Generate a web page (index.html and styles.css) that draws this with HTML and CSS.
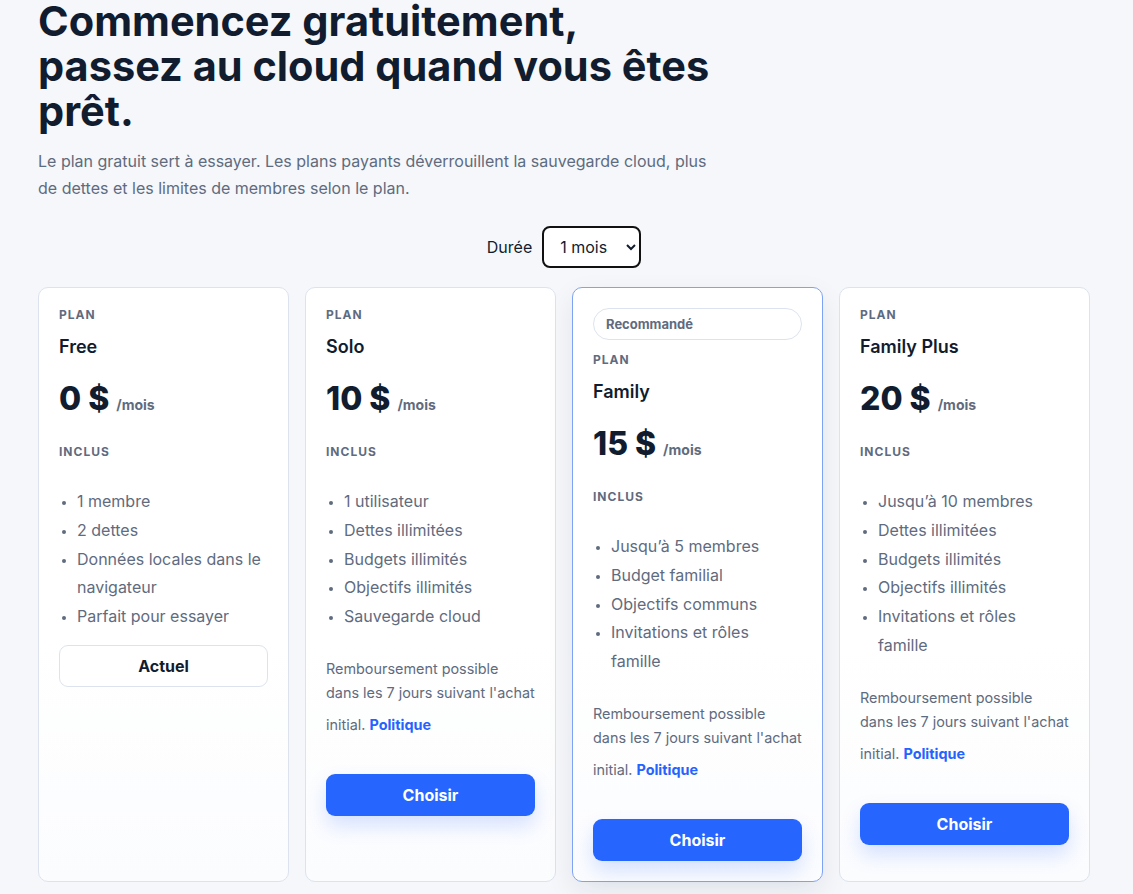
FILE: index.html
```html
<!DOCTYPE html>
<html lang="fr">
<head>
    <meta charset="UTF-8">
    <title>Tarifs</title>
    <link rel="stylesheet" href="styles.css">
</head>
<body>
    <main class="page">
        <header class="hero">
            <h1>Commencez gratuitement, passez au cloud quand vous êtes prêt.</h1>
            <p class="lead">Le plan gratuit sert à essayer. Les plans payants déverrouillent la sauvegarde cloud, plus de dettes et les limites de membres selon le plan.</p>
        </header>

        <div class="duration">
            <label for="duration">Durée</label>
            <select id="duration">
                <option>1 mois</option>
                <option>12 mois</option>
            </select>
        </div>

        <section class="plans">
            <article class="plan">
                <div class="plan-label">Plan</div>
                <h2 class="plan-name">Free</h2>
                <div class="price">0 $ <span class="per">/mois</span></div>
                <div class="plan-label included">Inclus</div>
                <ul class="features">
                    <li>1 membre</li>
                    <li>2 dettes</li>
                    <li>Données locales dans le navigateur</li>
                    <li>Parfait pour essayer</li>
                </ul>
                <button class="btn btn-current">Actuel</button>
            </article>

            <article class="plan">
                <div class="plan-label">Plan</div>
                <h2 class="plan-name">Solo</h2>
                <div class="price">10 $ <span class="per">/mois</span></div>
                <div class="plan-label included">Inclus</div>
                <ul class="features">
                    <li>1 utilisateur</li>
                    <li>Dettes illimitées</li>
                    <li>Budgets illimités</li>
                    <li>Objectifs illimités</li>
                    <li>Sauvegarde cloud</li>
                </ul>
                <p class="refund">Remboursement possible dans les 7 jours suivant l'achat initial. <a href="#">Politique</a></p>
                <button class="btn btn-primary">Choisir</button>
            </article>

            <article class="plan featured">
                <div class="badge">Recommandé</div>
                <div class="plan-label">Plan</div>
                <h2 class="plan-name">Family</h2>
                <div class="price">15 $ <span class="per">/mois</span></div>
                <div class="plan-label included">Inclus</div>
                <ul class="features">
                    <li>Jusqu’à 5 membres</li>
                    <li>Budget familial</li>
                    <li>Objectifs communs</li>
                    <li>Invitations et rôles famille</li>
                </ul>
                <p class="refund">Remboursement possible dans les 7 jours suivant l'achat initial. <a href="#">Politique</a></p>
                <button class="btn btn-primary">Choisir</button>
            </article>

            <article class="plan">
                <div class="plan-label">Plan</div>
                <h2 class="plan-name">Family Plus</h2>
                <div class="price">20 $ <span class="per">/mois</span></div>
                <div class="plan-label included">Inclus</div>
                <ul class="features">
                    <li>Jusqu’à 10 membres</li>
                    <li>Dettes illimitées</li>
                    <li>Budgets illimités</li>
                    <li>Objectifs illimités</li>
                    <li>Invitations et rôles famille</li>
                </ul>
                <p class="refund">Remboursement possible dans les 7 jours suivant l'achat initial. <a href="#">Politique</a></p>
                <button class="btn btn-primary">Choisir</button>
            </article>
        </section>
    </main>
</body>
</html>
```

FILE: styles.css
```css
body {
    margin: 0;
    background: #f5f7fb;
    font-family: 'Inter', 'Noto Sans', sans-serif;
    color: #0f172a;
}

.page {
    width: 1052px;
    padding: 0 0 40px 38px;
}

.hero {
    max-width: 680px;
}

h1 {
    margin: -1px 0 0;
    font-size: 41.5px;
    line-height: 45px;
    font-weight: 700;
    color: #111c2e;
}

.lead {
    margin: 14px 0 0;
    font-size: 16px;
    line-height: 27px;
    color: #5f6b7e;
}

.duration {
    display: flex;
    align-items: center;
    justify-content: center;
    gap: 10px;
    margin-top: 24px;
    font-size: 16px;
    color: #111c2e;
}

.duration select {
    height: 42px;
    padding: 0 6px 0 12px;
    border: 2px solid #111;
    border-radius: 8px;
    background: #fff;
    font-family: inherit;
    font-size: 16px;
    color: #111c2e;
}

.plans {
    display: grid;
    grid-template-columns: repeat(4, 1fr);
    gap: 16px;
    margin-top: 19px;
}

.plan {
    background: linear-gradient(180deg, #ffffff 60%, #fbfcfe);
    border: 1px solid #dde3ee;
    border-radius: 10px;
    padding: 20px;
}

.plan.featured {
    border-color: #7ea3f4;
    box-shadow: 0 10px 28px rgba(15, 23, 42, 0.08);
}

.badge {
    height: 30px;
    line-height: 30px;
    border: 1px solid #dde3ee;
    border-radius: 999px;
    padding: 0 12px;
    font-size: 13px;
    font-weight: 700;
    color: #5f6b7e;
    margin-bottom: 13px;
}

.plan-label {
    font-size: 12px;
    line-height: 13px;
    font-weight: 700;
    letter-spacing: 1px;
    text-transform: uppercase;
    color: #5f6b7e;
}

.plan-name {
    margin: 14px 0 0;
    font-size: 18px;
    line-height: 24px;
    font-weight: 600;
    color: #111c2e;
}

.price {
    margin-top: 21px;
    font-size: 32px;
    line-height: 38px;
    font-weight: 800;
    color: #111c2e;
}

.per {
    font-size: 14px;
    font-weight: 700;
    color: #5f6b7e;
}

.included {
    margin-top: 21px;
}

.features {
    margin: 29px 0 14px;
    padding-left: 18px;
    font-size: 16px;
    line-height: 28.8px;
    color: #5f6b7e;
}

.features li::marker {
    font-size: 12px;
}

.refund {
    margin: 26px 0 29px;
    font-size: 14.4px;
    line-height: 24px;
    color: #5f6b7e;
}

.refund a {
    line-height: 40px;
    font-weight: 700;
    color: #2563ff;
    text-decoration: none;
}

.btn {
    display: block;
    width: 100%;
    height: 42px;
    border-radius: 9px;
    font-family: inherit;
    font-size: 16px;
    font-weight: 700;
    cursor: pointer;
}

.btn-current {
    background: #fff;
    border: 1px solid #dde3ee;
    color: #111c2e;
}

.btn-primary {
    background: #2666ff;
    border: none;
    color: #fff;
    box-shadow: 0 10px 20px rgba(38, 102, 255, 0.18);
}
```
